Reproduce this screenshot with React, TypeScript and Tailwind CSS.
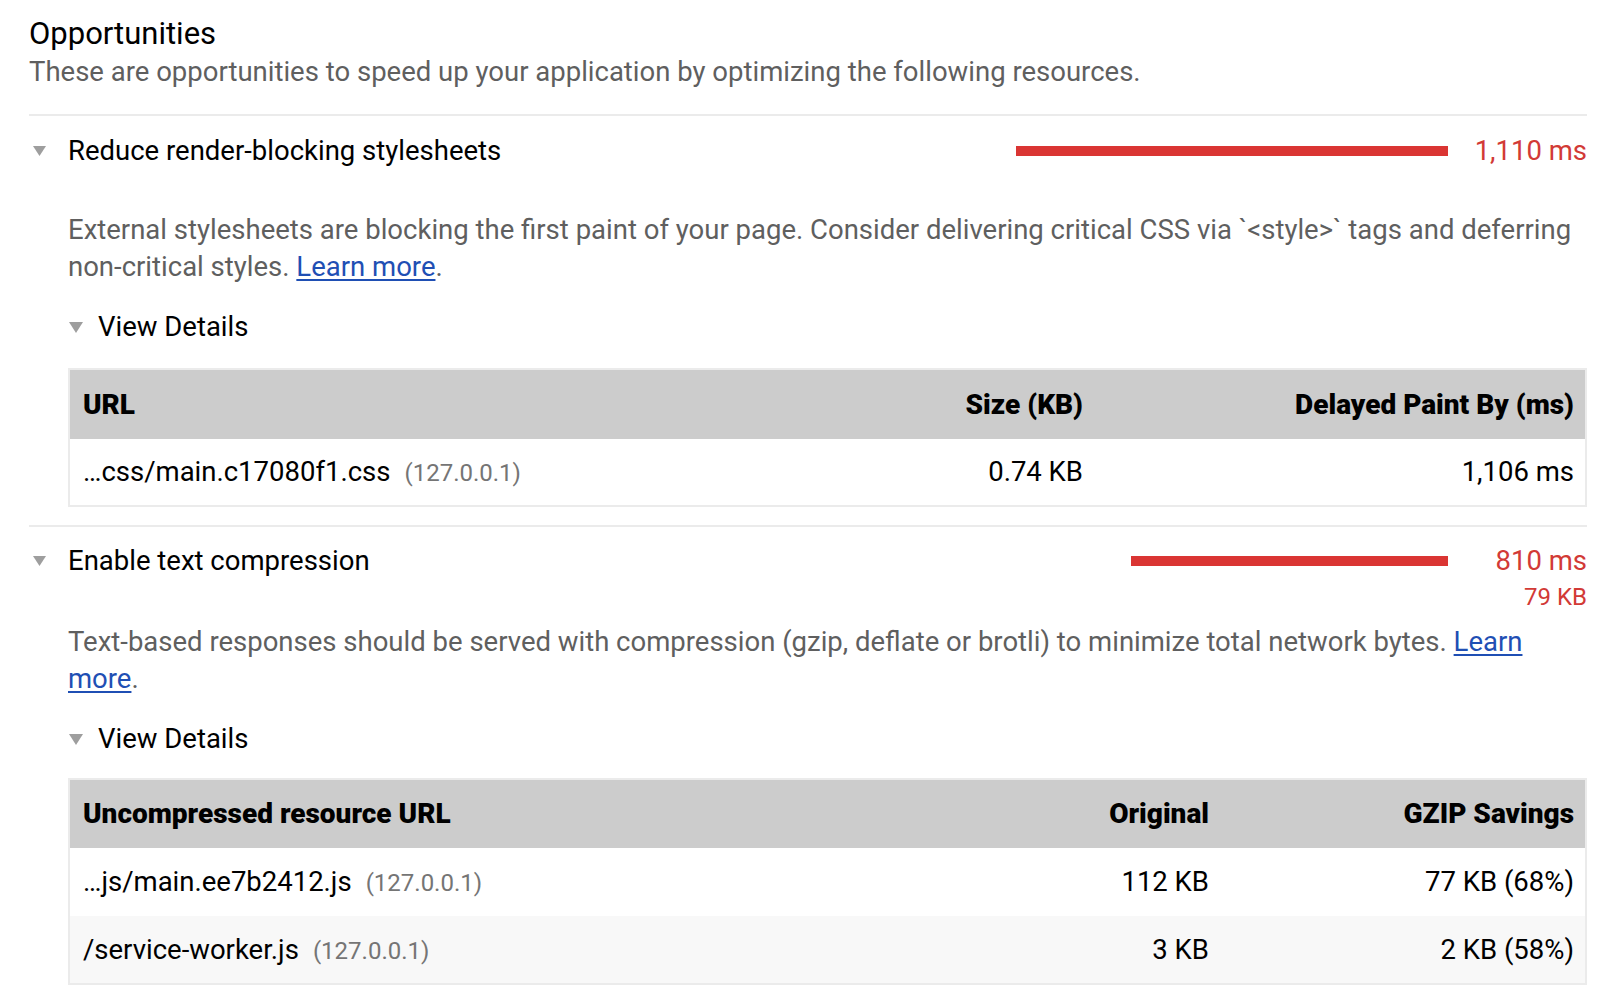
import React from "react";

const Tri = ({ cls }: { cls: string }) => (
  <svg viewBox="0 0 12 10" className={cls} aria-hidden preserveAspectRatio="none">
    <path d="M0 0 L12 0 L6 10 Z" fill="#9e9e9e" />
  </svg>
);

const Url = ({ path, host }: { path: string; host: string }) => (
  <span>
    <span className="text-black">{path}</span>
    <span className="ml-[14px] text-[#757575] text-[24px]">{host}</span>
  </span>
);

const LearnMore = () => (
  <a className="text-[#1f4fb4] underline underline-offset-[3px] decoration-[2px]" href="#">Learn more</a>
);

export default function App() {
  return (
    <div className="w-[1620px] min-h-[1002px] bg-white font-['Roboto',sans-serif] pl-[29px] pr-[33px] pt-[14px] text-black">
      <h2 className="text-[31px] leading-[40px] font-normal">Opportunities</h2>
      <p className="text-[27.5px] leading-[36px] text-[#5f5f5f]">
        These are opportunities to speed up your application by optimizing the following resources.
      </p>
      <div className="mt-[24px] h-[2px] bg-[#ebebeb]" />

      {/* Audit 1 */}
      <div className="pt-[17px]">
        <div className="flex items-center h-[36px]">
          <Tri cls="w-[13px] h-[10px] ml-[4px]" />
          <span className="ml-[22px] text-[27.5px]">Reduce render-blocking stylesheets</span>
          <div className="ml-auto w-[432px] h-[10px] bg-[#da3533]" />
          <span className="w-[139px] text-right text-[27.5px] text-[#d23a36]">1,110 ms</span>
        </div>
        <div className="pl-[39px] pt-[43px]">
          <p className="text-[27.5px] leading-[36.5px] text-[#5f5f5f]">
            External stylesheets are blocking the first paint of your page. Consider delivering critical CSS via `&lt;style&gt;` tags and deferring non-critical styles. <LearnMore />.
          </p>
          <div className="mt-[24px] flex items-center h-[36px]">
            <Tri cls="w-[14px] h-[11px] ml-[1px]" />
            <span className="ml-[15px] text-[27.5px]">View Details</span>
          </div>
          <div className="mt-[23px] border-2 border-[#ebebeb]">
            <div className="grid grid-cols-[1fr_300px_489px] bg-[#cccccc] h-[69px] items-center text-[28px] font-black">
              <div className="pl-[13px]">URL</div>
              <div className="text-right pr-[13px]">Size (KB)</div>
              <div className="text-right pr-[11px]">Delayed Paint By (ms)</div>
            </div>
            <div className="grid grid-cols-[1fr_300px_489px] bg-white h-[66px] items-center text-[27.5px]">
              <div className="pl-[13px]"><Url path="…css/main.c17080f1.css" host="(127.0.0.1)" /></div>
              <div className="text-right pr-[13px]">0.74 KB</div>
              <div className="text-right pr-[11px]">1,106 ms</div>
            </div>
          </div>
        </div>
      </div>
      <div className="mt-[18px] h-[2px] bg-[#ebebeb]" />

      {/* Audit 2 */}
      <div className="pt-[16px]">
        <div className="flex items-start">
          <div className="flex items-center h-[36px]">
            <Tri cls="w-[13px] h-[10px] ml-[4px]" />
            <span className="ml-[22px] text-[27.5px]">Enable text compression</span>
          </div>
          <div className="ml-auto mt-[13px] w-[317px] h-[10px] bg-[#da3533]" />
          <div className="w-[139px] text-right text-[#d23a36]">
            <div className="text-[27.5px] leading-[36px]">810 ms</div>
            <div className="text-[24px] leading-[36px]">79 KB</div>
          </div>
        </div>
        <div className="pl-[39px] mt-[9px]">
          <p className="text-[27.5px] leading-[36.5px] text-[#5f5f5f]">
            Text-based responses should be served with compression (gzip, deflate or brotli) to minimize total network bytes. <LearnMore />.
          </p>
          <div className="mt-[24px] flex items-center h-[36px]">
            <Tri cls="w-[14px] h-[11px] ml-[1px]" />
            <span className="ml-[15px] text-[27.5px]">View Details</span>
          </div>
          <div className="mt-[21px] border-2 border-[#ebebeb]">
            <div className="grid grid-cols-[1fr_300px_363px] bg-[#cccccc] h-[68px] items-center text-[28px] font-black">
              <div className="pl-[13px]">Uncompressed resource URL</div>
              <div className="text-right pr-[13px]">Original</div>
              <div className="text-right pr-[11px]">GZIP Savings</div>
            </div>
            <div className="grid grid-cols-[1fr_300px_363px] bg-white h-[68px] items-center text-[27.5px]">
              <div className="pl-[13px]"><Url path="…js/main.ee7b2412.js" host="(127.0.0.1)" /></div>
              <div className="text-right pr-[13px]">112 KB</div>
              <div className="text-right pr-[11px]">77 KB (68%)</div>
            </div>
            <div className="grid grid-cols-[1fr_300px_363px] bg-[#f8f8f8] h-[67px] items-center text-[27.5px]">
              <div className="pl-[13px]"><Url path="/service-worker.js" host="(127.0.0.1)" /></div>
              <div className="text-right pr-[13px]">3 KB</div>
              <div className="text-right pr-[11px]">2 KB (58%)</div>
            </div>
          </div>
        </div>
      </div>
    </div>
  );
}
